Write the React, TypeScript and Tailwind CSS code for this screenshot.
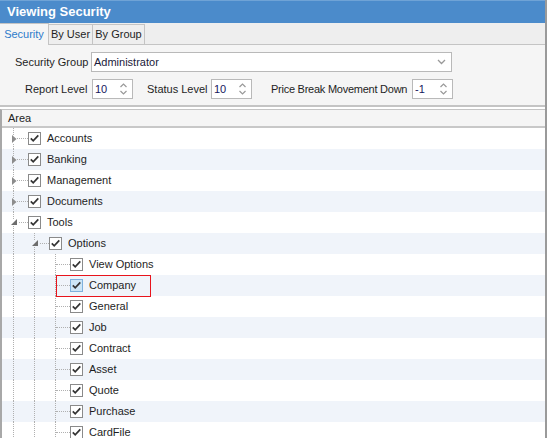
import React from "react";

const Check = ({ hover }: { hover?: boolean }) => (
  <div
    className={`w-[13px] h-[13px] border flex items-center justify-center shrink-0 ${hover ? "bg-[#cde6f7] border-[#7fb1dd]" : "bg-white border-[#8a8a8a]"}`}
  >
    <svg width="11" height="11" viewBox="0 0 11 11">
      <path d="M1.8 5.3 L4.2 7.8 L9.3 2.3" fill="none" stroke="#333" strokeWidth="1.7" />
    </svg>
  </div>
);

const Collapsed = () => (
  <svg width="5" height="8" viewBox="0 0 5 8">
    <path d="M0 0 L4.5 4 L0 8 Z" fill="#8c8c8c" />
  </svg>
);

const Expanded = () => (
  <svg width="7" height="7" viewBox="0 0 7 7">
    <path d="M6 0 L6 6 L0 6 Z" fill="#6d6d6d" />
  </svg>
);

type Row = { label: string; level: number; exp?: "c" | "e"; hover?: boolean };

const rows: Row[] = [
  { label: "Accounts", level: 0, exp: "c" },
  { label: "Banking", level: 0, exp: "c" },
  { label: "Management", level: 0, exp: "c" },
  { label: "Documents", level: 0, exp: "c" },
  { label: "Tools", level: 0, exp: "e" },
  { label: "Options", level: 1, exp: "e" },
  { label: "View Options", level: 2 },
  { label: "Company", level: 2, hover: true },
  { label: "General", level: 2 },
  { label: "Job", level: 2 },
  { label: "Contract", level: 2 },
  { label: "Asset", level: 2 },
  { label: "Quote", level: 2 },
  { label: "Purchase", level: 2 },
  { label: "CardFile", level: 2 },
];

const Spin = ({ value, w }: { value: string; w: string }) => (
  <div className={`${w} h-[20px] bg-white border border-[#b9b9b9] flex items-center pl-[2px] shrink-0`}>
    <span className="flex-1 text-[#16165e]">{value}</span>
    <svg width="9" height="14" viewBox="0 0 9 14" className="mr-[4px]">
      <path d="M1.5 5 L4.5 2 L7.5 5" fill="none" stroke="#999" strokeWidth="1.2" />
      <path d="M1.5 9 L4.5 12 L7.5 9" fill="none" stroke="#999" strokeWidth="1.2" />
    </svg>
  </div>
);

export default function App() {
  return (
    <div
      className="w-[547px] h-[438px] overflow-hidden bg-white text-[11px] text-[#1e1e1e] flex flex-col border-r-2 border-[#9a9a9a] whitespace-nowrap"
      style={{ fontFamily: '"Liberation Sans", Arial, sans-serif' }}
    >
      {/* Title */}
      <div className="h-[23px] bg-[#4b8bcb] border-t border-[#6fa3d6] flex items-center pl-[7px] text-white font-bold text-[13px] shrink-0">
        Viewing Security
      </div>
      {/* Tabs */}
      <div className="h-[22px] bg-[#eeeeee] flex items-end shrink-0 border-b border-[#c4c4c4] relative">
        <div className="h-[22px] w-[49px] bg-[#f5f5f5] border border-b-0 border-l-0 border-[#c4c4c4] flex items-center justify-center text-[#2d7bcb] -mb-px relative z-10">
          Security
        </div>
        <div className="h-[20px] w-[44px] border-t border-r border-[#c4c4c4] flex items-center justify-center">
          By User
        </div>
        <div className="h-[20px] w-[52px] border-t border-r border-[#c4c4c4] flex items-center justify-center">
          By Group
        </div>
      </div>
      {/* Panel */}
      <div className="h-[62px] bg-[#f5f5f5] shrink-0 flex flex-col pt-[7px] gap-[7px] border-b-2 border-[#c4c4c4]">
        <div className="flex items-center">
          <span className="ml-[15px] w-[76px] shrink-0">Security Group</span>
          <div className="w-[361px] h-[20px] bg-white border border-[#b9b9b9] flex items-center pl-[2px]">
            <span className="flex-1 text-[#1a1a3a]">Administrator</span>
            <svg width="9" height="6" viewBox="0 0 9 6" className="mr-[5px]">
              <path d="M1 1 L4.5 4.5 L8 1" fill="none" stroke="#999" strokeWidth="1.3" />
            </svg>
          </div>
        </div>
        <div className="flex items-center">
          <span className="ml-[25px] w-[67px] shrink-0">Report Level</span>
          <Spin value="10" w="w-[41px]" />
          <span className="ml-[14px] w-[64px] shrink-0">Status Level</span>
          <Spin value="10" w="w-[41px]" />
          <span className="ml-[19px] w-[141px] shrink-0 tracking-[-0.25px]">Price Break Movement Down</span>
          <Spin value="-1" w="w-[41px]" />
        </div>
      </div>
      {/* Grid */}
      <div className="flex-1 flex flex-col border-l-2 border-[#a8a8a8] mt-[2px] border-t border-t-[#c4c4c4]">
        <div className="h-[18px] bg-[#f5f5f5] border-b-2 border-[#c8c8c8] flex items-center pl-[6px] shrink-0">
          Area
        </div>
        {rows.map((r, i) => (
          <div
            key={r.label}
            className={`h-[21px] shrink-0 flex items-stretch ${i % 2 === 1 ? "bg-[#f0f4fa]" : "bg-white"}`}
          >
            {Array.from({ length: r.level + 1 }).map((_, c) => {
              const isLast = c === r.level;
              return (
                <div key={c} className="w-[21px] shrink-0 relative">
                  <div className="absolute left-[11px] top-0 bottom-0 border-l border-dotted border-[#b0b0b0]" />
                  {isLast && (
                    <>
                      <div className="absolute left-[12px] right-[-5px] top-[10px] border-t border-dotted border-[#b0b0b0]" />
                      {r.exp && (
                        <div className="absolute left-[8px] top-0 bottom-0 w-[9px] flex items-center justify-center">
                          <div className={`flex ${i % 2 === 1 ? "bg-[#f0f4fa]" : "bg-white"}`}>
                            {r.exp === "c" ? <Collapsed /> : <Expanded />}
                          </div>
                        </div>
                      )}
                    </>
                  )}
                </div>
              );
            })}
            <div className="ml-[5px] flex items-center relative">
              {r.hover && (
                <div className="absolute left-[-14px] top-0 w-[95px] h-[22px] border border-[#e8141c]" />
              )}
              <Check hover={r.hover} />
              <span className="ml-[6px]">{r.label}</span>
            </div>
          </div>
        ))}
      </div>
    </div>
  );
}
